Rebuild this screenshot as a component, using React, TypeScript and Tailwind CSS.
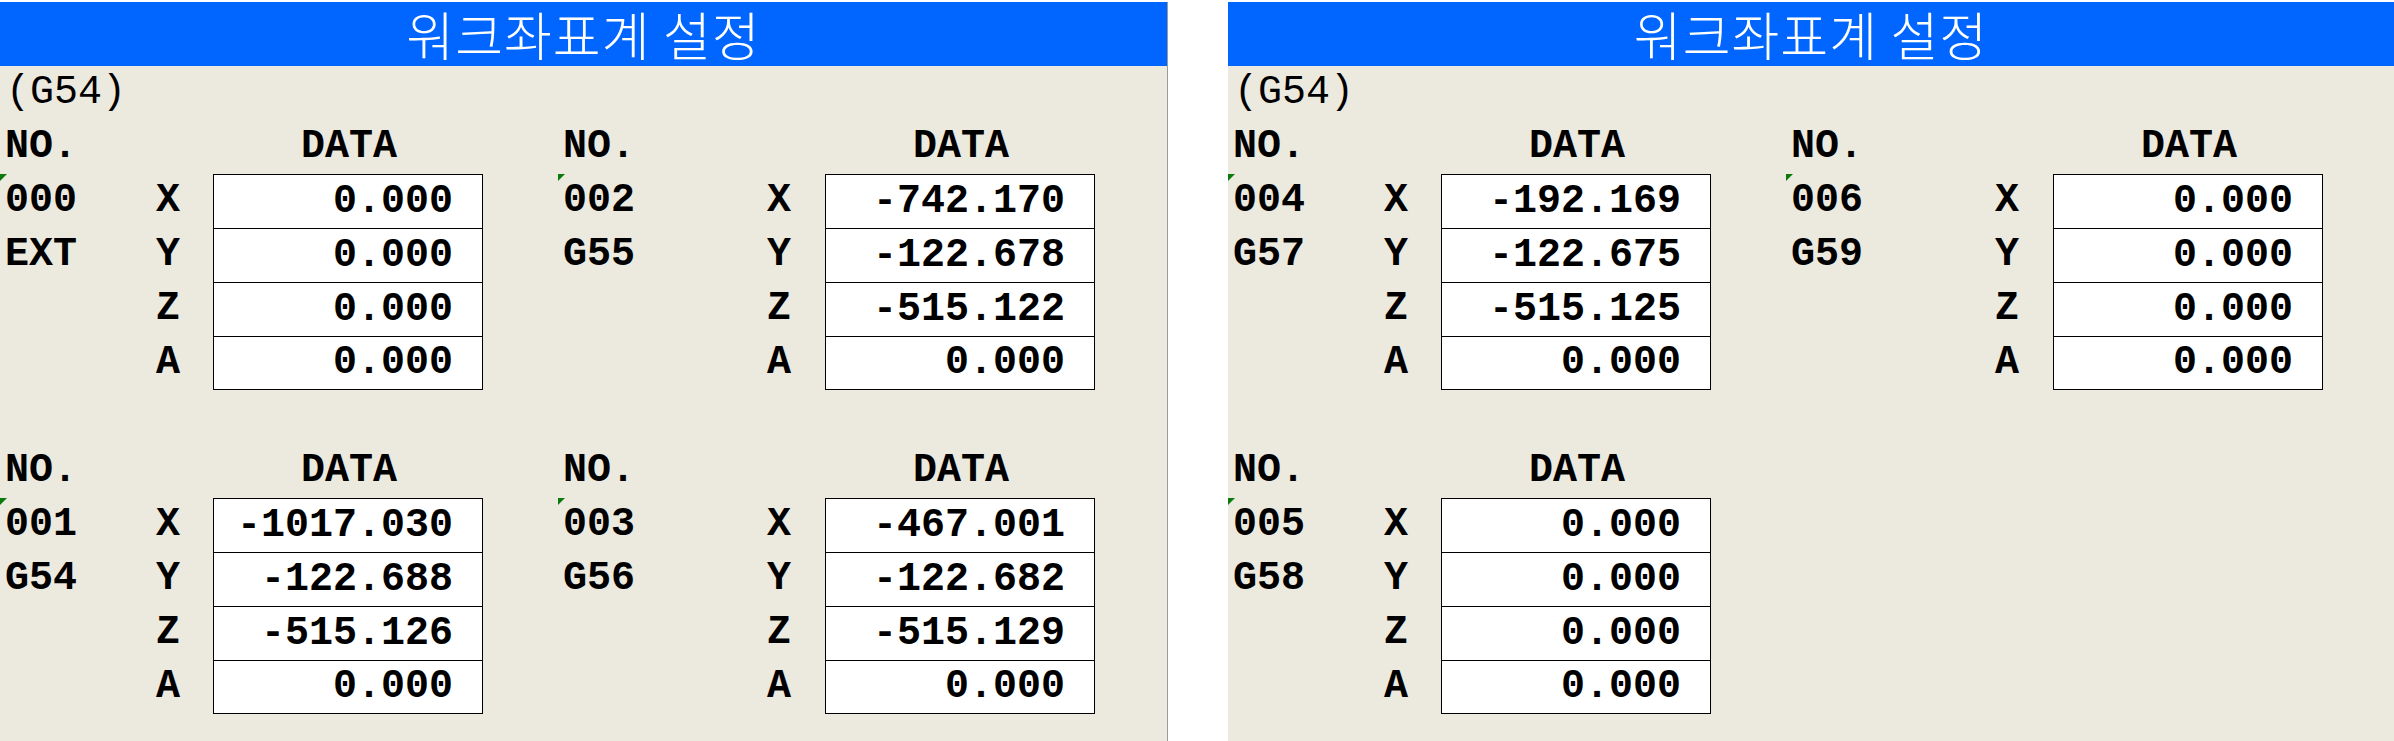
import React from "react";

type GroupData = {
  no: string;
  name: string;
  values: string[];
};

const AXES = ["X", "Y", "Z", "A"];

function Marker() {
  return (
    <svg className="absolute left-0 top-0" width="7" height="7" viewBox="0 0 7 7">
      <polygon points="0,0 7,0 0,7" fill="#0a7a0a" />
    </svg>
  );
}

function Group({ data, second }: { data: GroupData; second?: boolean }) {
  const noCol = second ? "w-[203px]" : "w-[150px]";
  const axisCol = second ? "w-[64px]" : "w-[63px]";
  return (
    <div className="flex flex-col">
      <div className="flex h-[54px] items-center">
        <div className={`${noCol} pl-[5px]`}>NO.</div>
        <div className={axisCol} />
        <div className="w-[270px] text-center pl-[2px]">DATA</div>
      </div>
      {AXES.map((ax, i) => (
        <div key={ax} className="flex h-[54px] items-stretch">
          <div className={`${noCol} relative flex items-center pl-[5px]`}>
            {i === 0 && <Marker />}
            {i === 0 ? data.no : i === 1 ? data.name : ""}
          </div>
          <div className={`${axisCol} flex items-center pl-[6px]`}>{ax}</div>
          <div
            className={`w-[270px] flex items-center justify-end pr-[29px] bg-white border-x border-t border-black ${
              i === 3 ? "border-b" : ""
            }`}
          >
            {data.values[i]}
          </div>
        </div>
      ))}
    </div>
  );
}

function Section({ groups }: { groups: GroupData[] }) {
  return (
    <div className="flex">
      <Group data={groups[0]} />
      {groups[1] && (
        <div className="ml-[75px]">
          <Group data={groups[1]} second />
        </div>
      )}
    </div>
  );
}

function Panel({
  top,
  bottom,
  border,
}: {
  top: GroupData[];
  bottom: GroupData[];
  border?: boolean;
}) {
  return (
    <div
      className={`flex h-[739px] flex-col bg-[#ecE9df] ${
        border ? "w-[1168px] border-r border-[#9a9a9a]" : "w-[1166px]"
      }`}
    >
      <div
        className="flex h-[64px] items-center justify-center bg-[#0066ff] text-[52px] font-light text-white"
        style={{ fontFamily: '"Noto Sans CJK KR", "Noto Sans", sans-serif' }}
      >
        <span className="inline-block leading-[56px] tracking-[1px]">워크좌표계 설정</span>
      </div>
      <div
        className="flex flex-col text-[40px] font-bold leading-none text-black"
        style={{ fontFamily: '"Liberation Mono", "DejaVu Sans Mono", monospace' }}
      >
        <div className="flex h-[54px] items-center pl-[6px] font-normal">(G54)</div>
        <Section groups={top} />
        <div className="h-[54px]" />
        <Section groups={bottom} />
      </div>
    </div>
  );
}

const Z4 = ["0.000", "0.000", "0.000", "0.000"];

export default function App() {
  return (
    <div className="flex h-[741px] w-[2394px] overflow-hidden bg-white pt-[2px]">
      <Panel
        border
        top={[
          { no: "000", name: "EXT", values: Z4 },
          { no: "002", name: "G55", values: ["-742.170", "-122.678", "-515.122", "0.000"] },
        ]}
        bottom={[
          { no: "001", name: "G54", values: ["-1017.030", "-122.688", "-515.126", "0.000"] },
          { no: "003", name: "G56", values: ["-467.001", "-122.682", "-515.129", "0.000"] },
        ]}
      />
      <div className="w-[60px]" />
      <Panel
        top={[
          { no: "004", name: "G57", values: ["-192.169", "-122.675", "-515.125", "0.000"] },
          { no: "006", name: "G59", values: Z4 },
        ]}
        bottom={[{ no: "005", name: "G58", values: Z4 }]}
      />
    </div>
  );
}
